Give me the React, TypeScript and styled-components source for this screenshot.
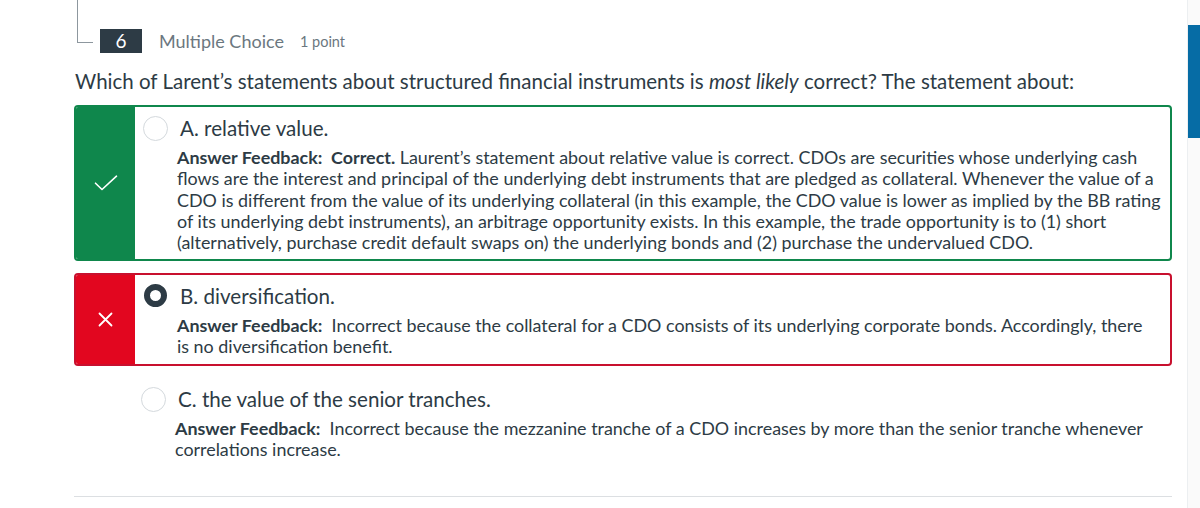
import React from "react";
import styled, { createGlobalStyle } from "styled-components";

const Global = createGlobalStyle`
  html, body { margin: 0; padding: 0; background: #fff; }
  body { font-family: Lato, "Open Sans", "Liberation Sans", sans-serif; color: #2d3b45; }
`;

const Page = styled.div`
  position: relative;
  width: 1200px;
  height: 508px;
  overflow: hidden;
  background: #fff;
`;

const Main = styled.div`
  width: 1098px;
  padding-left: 74px;
  display: flex;
  flex-direction: column;
`;

const Header = styled.div`
  display: flex;
  align-items: flex-start;
`;

const Bracket = styled.div`
  width: 15px;
  height: 42px;
  margin-left: 3px;
  border-left: 1px solid #8d979e;
  border-bottom: 1px solid #8d979e;
`;

const Badge = styled.div`
  margin-top: 29px;
  margin-left: 7px;
  width: 42px;
  height: 24px;
  background: #2d3b45;
  color: #fff;
  font-size: 19px;
  line-height: 24px;
  text-align: center;
`;

const QType = styled.div`
  margin-top: 29px;
  margin-left: 17px;
  height: 24px;
  line-height: 24px;
  font-size: 18px;
  color: #6b7780;
`;

const Points = styled.div`
  margin-top: 29px;
  margin-left: 16px;
  height: 24px;
  line-height: 26px;
  font-size: 14.5px;
  color: #6b7780;
`;

const Question = styled.div`
  margin-top: 14px;
  font-size: 20.5px;
  line-height: 28px;
  color: #2d3b45;
  padding-left: 1px;
`;

type Status = "correct" | "wrong" | "none";

const colors: Record<Status, { panel: string; border: string; pad: string }> = {
  correct: { panel: "#0f874c", border: "#0f874c", pad: "7px 0 5.5px 8px" },
  wrong: { panel: "#e2061f", border: "#c8102e", pad: "7px 0 6.5px 8px" },
  none: { panel: "transparent", border: "transparent", pad: "7px 0 0 8px" },
};

const Option = styled.div<{ $status: Status; $first?: boolean }>`
  display: flex;
  margin-top: ${(p) => (p.$first ? "10px" : "12px")};
  border: ${(p) => (p.$status === "none" ? "0" : `2px solid ${colors[p.$status].border}`)};
  border-radius: 4px;
  overflow: hidden;
`;

const Panel = styled.div<{ $status: Status }>`
  box-sizing: border-box;
  flex: 0 0 59px;
  width: 59px;
  background: ${(p) => colors[p.$status].panel};
  display: flex;
  align-items: center;
  justify-content: center;
`;

const Body = styled.div<{ $status: Status }>`
  flex: 1;
  padding: ${(p) => colors[p.$status].pad};
`;

const LabelRow = styled.div`
  display: flex;
  align-items: center;
  height: 28px;
`;

const Radio = styled.span<{ $checked?: boolean }>`
  box-sizing: border-box;
  width: ${(p) => (p.$checked ? "23px" : "25px")};
  height: ${(p) => (p.$checked ? "23px" : "25px")};
  margin-left: ${(p) => (p.$checked ? "1px" : "0")};
  margin-right: ${(p) => (p.$checked ? "13px" : "12px")};
  border-radius: 50%;
  border: ${(p) => (p.$checked ? "6px solid #2d3b45" : "1px solid #d4d9dd")};
  background: #fff;
  flex: 0 0 auto;
`;

const Label = styled.span`
  font-size: 20.6px;
  line-height: 28px;
  color: #2d3b45;
`;

const Feedback = styled.div`
  margin-top: 5px;
  margin-left: 34px;
  font-size: 17.9px;
  line-height: 21.3px;
  color: #2d3b45;
  white-space: nowrap;
`;

const Strong = styled.b`
  font-weight: 700;
`;

const Separator = styled.div`
  margin-top: 35px;
  height: 1px;
  background: #dcdfe2;
`;

const ScrollTrack = styled.div`
  position: absolute;
  top: 0;
  right: 0;
  width: 12px;
  height: 508px;
  border-left: 1px solid #eceff1;
  background: #fafafa;
`;

const ScrollThumb = styled.div`
  position: absolute;
  top: 25px;
  left: 0;
  width: 12px;
  height: 113px;
  background: #066ca5;
`;

const Check = () => (
  <svg width="24" height="16" viewBox="0 0 24 16" fill="none">
    <path d="M1.5 8.2 L8 14.5 L22.5 1.2" stroke="#fff" strokeWidth="1.6" strokeLinecap="round" strokeLinejoin="round" />
  </svg>
);

const Cross = () => (
  <svg width="15" height="15" viewBox="0 0 15 15" fill="none">
    <path d="M1.5 1.5 L13.5 13.5 M13.5 1.5 L1.5 13.5" stroke="#fff" strokeWidth="1.8" strokeLinecap="round" />
  </svg>
);

export default function App() {
  return (
    <Page>
      <Global />
      <Main>
        <Header>
          <Bracket />
          <Badge>6</Badge>
          <QType>Multiple Choice</QType>
          <Points>1 point</Points>
        </Header>
        <Question>
          Which of Larent’s statements about structured financial instruments is <i>most likely</i> correct? The statement about:
        </Question>

        <Option $status="correct" $first>
          <Panel $status="correct">
            <Check />
          </Panel>
          <Body $status="correct">
            <LabelRow>
              <Radio />
              <Label>A. relative value.</Label>
            </LabelRow>
            <Feedback>
              <Strong>Answer Feedback:&nbsp; Correct.</Strong> Laurent’s statement about relative value is correct. CDOs are securities whose underlying cash
              <br />
              flows are the interest and principal of the underlying debt instruments that are pledged as collateral. Whenever the value of a
              <br />
              CDO is different from the value of its underlying collateral (in this example, the CDO value is lower as implied by the BB rating
              <br />
              of its underlying debt instruments), an arbitrage opportunity exists. In this example, the trade opportunity is to (1) short
              <br />
              (alternatively, purchase credit default swaps on) the underlying bonds and (2) purchase the undervalued CDO.
            </Feedback>
          </Body>
        </Option>

        <Option $status="wrong">
          <Panel $status="wrong">
            <Cross />
          </Panel>
          <Body $status="wrong">
            <LabelRow>
              <Radio $checked />
              <Label>B. diversification.</Label>
            </LabelRow>
            <Feedback>
              <Strong>Answer Feedback:</Strong>&nbsp; Incorrect because the collateral for a CDO consists of its underlying corporate bonds. Accordingly, there
              <br />
              is no diversification benefit.
            </Feedback>
          </Body>
        </Option>

        <Option $status="none">
          <Panel $status="none" />
          <Body $status="none">
            <LabelRow>
              <Radio />
              <Label>C. the value of the senior tranches.</Label>
            </LabelRow>
            <Feedback>
              <Strong>Answer Feedback:</Strong>&nbsp; Incorrect because the mezzanine tranche of a CDO increases by more than the senior tranche whenever
              <br />
              correlations increase.
            </Feedback>
          </Body>
        </Option>

        <Separator />
      </Main>
      <ScrollTrack>
        <ScrollThumb />
      </ScrollTrack>
    </Page>
  );
}
